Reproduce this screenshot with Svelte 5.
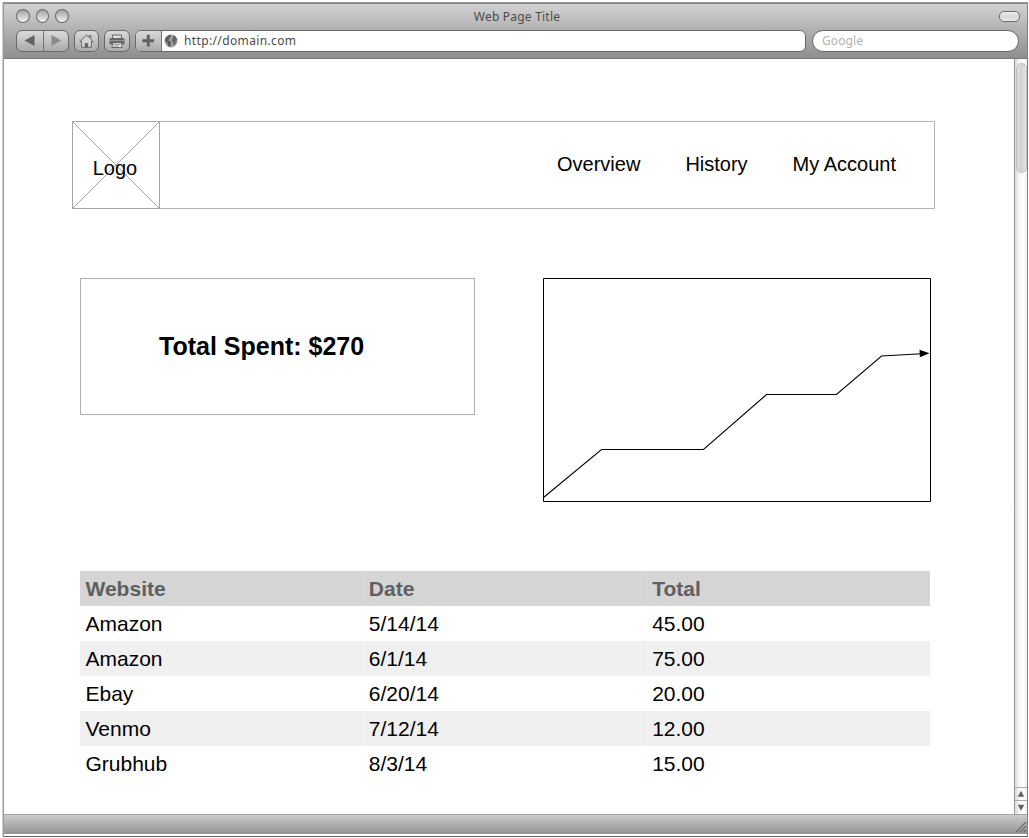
<script>
  const nav = ['Overview', 'History', 'My Account'];
  const rows = [
    ['Amazon', '5/14/14', '45.00'],
    ['Amazon', '6/1/14', '75.00'],
    ['Ebay', '6/20/14', '20.00'],
    ['Venmo', '7/12/14', '12.00'],
    ['Grubhub', '8/3/14', '15.00']
  ];
</script>

<div class="window">
  <header class="chrome">
    <div class="titlebar">
      <div class="lights"><i></i><i></i><i></i></div>
      <div class="title">Web Page Title</div>
      <div class="pill"></div>
    </div>
    <div class="toolbar">
      <div class="btn history">
        <span class="half"><svg width="26" height="20" viewBox="0 0 26 20"><path d="M7.5 9.5 17.5 4v11z" fill="#626262" /></svg></span>
        <span class="half last"><svg width="25" height="20" viewBox="0 0 25 20"><path d="M17 9.5 7.5 4v11z" fill="#8b8b8b" /></svg></span>
      </div>
      <div class="btn home">
        <svg width="23" height="20" viewBox="0 0 23 20" fill="none" stroke="#686868">
          <path d="M5 10.5 11.5 3.8l2.7 2.9V4.5h1.6v3.7l2.2 2.3h-1.6v5.8H6.6v-5.8z" fill="#d4d4d4" stroke-width="1" />
          <path d="M10 16.3v-4h2.8v4z" fill="#5f5f5f" stroke-width=".5" />
        </svg>
      </div>
      <div class="btn print">
        <svg width="24" height="20" viewBox="0 0 24 20">
          <path d="M7.5 7.5V4h9v3.5" fill="#ddd" stroke="#686868" />
          <path d="M6 7h12q1.5 0 1.5 1.6v4.6h-15V8.6Q4.500 7 6 7" fill="#666" />
          <path d="M5 9.6h14" stroke="#999" />
          <path d="M8 11.600h8l1.200 4.900H6.800z" fill="#e8e8e8" stroke="#666" />
          <path d="M9 13.300h6M8.600 15h5" stroke="#777" stroke-width=".8" />
        </svg>
      </div>
      <div class="address">
        <div class="plus">
          <svg width="25" height="20" viewBox="0 0 25 20"><path d="M10.8 3.800h3v4.400H18v3h-4.200v4.400h-3v-4.400H6.3v-3h4.500z" fill="#626262" /></svg>
        </div>
        <svg class="globe" width="14" height="14" viewBox="0 0 14 14">
          <circle cx="7" cy="7" r="6.500" fill="#9c9c9c" />
          <path d="M2 3.200 5 .9l2.400.3L6.800 3 5 4l.4 1.400L3.200 6l2.700 1 1.300 1.800L5.800 13 4 12l-.3-3L1 6.500z" fill="#5c5c5c" />
          <path d="m9 1.200 2.600 1.200L13.300 6l-1.800 1 .4 2-1.800 2.200L9 8.300 7.800 6l1-1.700z" fill="#646464" />
          <path d="m7.300 1.500 1.300.2-.9 1.700z" fill="#ddd" />
        </svg>
        <span class="url">http://domain.com</span>
      </div>
      <div class="search">Google</div>
    </div>
  </header>

  <div class="body">
    <main>
      <div class="sitebar">
        <div class="logo">
          <svg width="88" height="88" viewBox="0 0 88 88" fill="none" stroke="#a6a6a6"><path d="M.5.5h87v87H.5zl87 87m0-87-87 87" /></svg>
          <span>Logo</span>
        </div>
        <nav>
          {#each nav as item}<span>{item}</span>{/each}
        </nav>
      </div>

      <section class="panels">
        <div class="total">Total Spent: $270</div>
        <svg class="chart" width="388" height="224" viewBox="0 0 388 224" fill="none" stroke="#000">
          <path d="M.5.5h387v223H.5z" />
          <path d="M.5 219.500 58.500 171.500h102l63-55h70l45-38.500 40-2.300" stroke-width="1.050" />
          <path d="m376.500 71.800 10 3.400-9.600 4z" fill="#000" stroke="none" />
        </svg>
      </section>

      <table>
        <thead><tr><th>Website</th><th>Date</th><th>Total</th></tr></thead>
        <tbody>
          {#each rows as row}
            <tr>{#each row as cell}<td>{cell}</td>{/each}</tr>
          {/each}
        </tbody>
      </table>
    </main>

    <aside class="scrollbar">
      <div class="thumb"></div>
      <div class="arrows">
        <svg width="12" height="13" viewBox="0 0 12 13"><path d="M6 3 9.500 9.500h-7z" fill="#626262" /></svg>
        <svg width="12" height="14" viewBox="0 0 12 14"><path d="M6 10.500 9.500 4h-7z" fill="#626262" /></svg>
      </div>
    </aside>
  </div>

  <footer>
    <svg width="12" height="12" viewBox="0 0 12 12" stroke="#6c6c6c" stroke-width="1.1"><path d="M1 11 11 1M5 11l6-6M9 11l2-2" /></svg>
  </footer>
</div>

<style>
  :global(body) {
    margin: 0;
    background: #fff;
    overflow: hidden;
  }
  .window, .window * {
    box-sizing: border-box;
  }
  .window {
    display: flex;
    flex-direction: column;
    width: 1025px;
    height: 835px;
    margin: 2px 0 0 3px;
    border: 1px solid #999;
    border-right: 1px solid #808080;
    border-bottom-color: #5c5c5c;
    box-shadow: -1px 0 #d0d0d0;
    font-family: "Liberation Sans", Arial, sans-serif;
    color: #000;
  }
  svg {
    display: block;
    flex: none;
  }
  .chrome {
    height: 56px;
    flex: none;
    border-top: 1px solid #858585;
    border-bottom: 1px solid #7b7b7b;
    background: linear-gradient(#d2d2d2, #8e8e8e);
    font-family: "Noto Sans", sans-serif;
    font-size: 12px;
  }
  .titlebar {
    display: grid;
    grid-template-columns: 100px 1fr 100px;
    height: 26px;
    align-items: center;
    padding: 0 7px 0 12px;
  }
  .lights {
    display: flex;
    gap: 6px;
    margin-top: -2px;
  }
  .lights i {
    width: 13.7px;
    height: 14px;
    border: 1px solid #686868;
    border-radius: 50%;
    background: linear-gradient(#a2a2a2, #c4c4c4 45%, #f5f5f5);
  }
  .title {
    text-align: center;
    color: #4c4c4c;
    line-height: 16px;
    letter-spacing: .21px;
    margin-left: -2px;
  }
  .pill {
    justify-self: end;
    width: 21px;
    height: 11px;
    margin-top: -2px;
    border: 1px solid #6e6e6e;
    border-radius: 5px;
    background: linear-gradient(#f0f0f0, #d7d7d7 50%, #e9e9e9);
  }
  .toolbar {
    display: flex;
    height: 22px;
    padding: 0 8px 0 12px;
  }
  .btn, .address, .search {
    height: 22px;
    border: 1px solid #686868;
    border-radius: 6px;
  }
  .btn, .plus {
    background: linear-gradient(#dadada, #aaa);
  }
  .history {
    display: flex;
    width: 53px;
    margin-right: 5px;
  }
  .half + .half {
    border-left: 1px solid #737373;
  }
  .home {
    width: 25px;
    margin-right: 5px;
  }
  .print {
    width: 26px;
    margin-right: 5px;
  }
  .address {
    display: flex;
    align-items: center;
    width: 671px;
    margin-right: 6px;
    overflow: hidden;
    background: #fff;
  }
  .plus {
    width: 26px;
    height: 20px;
    border-right: 1px solid #777;
  }
  .globe {
    margin: -1px 6px 0 2px;
  }
  .url {
    color: #4a4a4a;
    line-height: 18px;
    letter-spacing: .37px;
  }
  .search {
    width: 207px;
    padding-left: 9px;
    border-radius: 11px;
    background: #fff;
    color: #b3b3b3;
    line-height: 20px;
    letter-spacing: .1px;
  }
  .body {
    display: flex;
    height: 755px;
    flex: none;
  }
  main {
    width: 1010px;
    padding: 62px 0 0 68px;
  }
  .sitebar {
    display: flex;
    justify-content: space-between;
    width: 863px;
    height: 88px;
    border: 1px solid #b3b3b3;
  }
  .logo {
    display: grid;
    width: 88px;
    height: 88px;
    margin: -1px;
    font-size: 20px;
  }
  .logo svg, .logo span {
    grid-area: 1 / 1;
  }
  .logo span {
    place-self: center;
    padding-top: 6px;
    line-height: 24px;
    margin-right: 2px;
  }
  nav {
    display: flex;
    gap: 45px;
    padding: 30px 38px 0 0;
    font-size: 20px;
    line-height: 24px;
  }
  .panels {
    display: flex;
    gap: 68px;
    height: 224px;
    margin: 69px 0 0 8px;
  }
  .total {
    width: 395px;
    height: 137px;
    padding-left: 78px;
    border: 1px solid #b0b0b0;
    font-size: 25px;
    font-weight: bold;
    line-height: 135px;
  }
  table {
    width: 850px;
    margin: 69px 0 0 8px;
    border-spacing: 0;
    table-layout: fixed;
    font-size: 21px;
    text-align: left;
  }
  th, td {
    height: 35px;
    padding: 1px 0 0 5.5px;
    line-height: 34px;
  }
  th {
    color: #606060;
    background: #d5d5d5;
  }
  th + th {
    box-shadow: inset 1px 0 #dadada;
  }
  tbody tr:nth-child(even) td {
    background: #f0f0f0;
  }
  tbody tr:nth-child(even) td + td {
    box-shadow: inset 1px 0 #f3f3f3;
  }
  .scrollbar {
    display: flex;
    flex-direction: column;
    justify-content: space-between;
    width: 13px;
    border-left: 1px solid #999;
    background: linear-gradient(90deg, #d9d9d9, #f7f7f7 35%, #fff 70%, #eee);
  }
  .thumb {
    width: 11px;
    height: 110px;
    margin: 4px 0 0 1px;
    border: 1px solid #bdbdbd;
    border-radius: 6px;
    background: linear-gradient(90deg, #dedede, #d2d2d2 50%, #e4e4e4);
  }
  .arrows svg {
    border-top: 1px solid #aaa;
  }
  footer {
    display: flex;
    justify-content: flex-end;
    align-items: flex-end;
    height: 20px;
    flex: none;
    padding: 0 0 1px;
    border-top: 1px solid #a2a2a2;
    background: linear-gradient(#cbcbcb, #929292);
  }
</style>
